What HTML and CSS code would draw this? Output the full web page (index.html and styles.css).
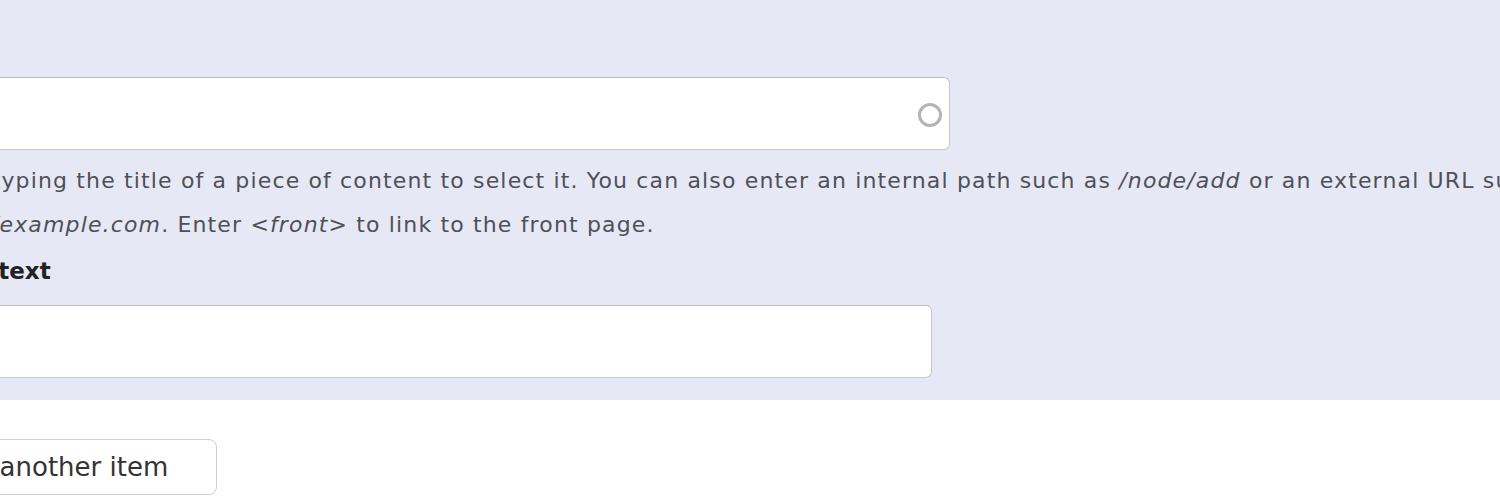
FILE: index.html
```html
<!DOCTYPE html>
<html lang="en">
<head>
<meta charset="utf-8">
<title>Link field</title>
<link rel="stylesheet" href="styles.css">
</head>
<body>
<div class="page">
  <section class="item">
    <div class="field">
      <div class="autocomplete">
        <input class="text-input url-input" type="text" aria-label="Link URL">
        <svg class="throbber" width="26" height="26" viewBox="0 0 26 26" aria-hidden="true">
          <circle cx="13" cy="13" r="10.5" fill="none" stroke="#b4b4b4" stroke-width="3"/>
        </svg>
      </div>
      <div class="description">Start typing the title of a piece of content to select it. You can also enter an internal path such as <em>/node/add</em> or an external URL such as <em>http://example.com</em>. Enter <em>&lt;front&gt;</em> to link to the front page.</div>
    </div>
    <div class="field">
      <label class="label" for="linktext">Link text</label>
      <input id="linktext" class="text-input title-input" type="text">
    </div>
  </section>
  <div class="actions">
    <button class="button" type="button">Add another item</button>
  </div>
</div>
</body>
</html>
```
FILE: styles.css
```css
html, body {
  margin: 0;
  padding: 0;
  background: #ffffff;
  overflow: hidden;
}
body {
  font-family: "DejaVu Sans", "Liberation Sans", Arial, sans-serif;
  color: #333;
}
.page {
  margin-left: -76px;
  width: 1900px;
}
.item {
  background: #e7e8f5;
  margin-left: -20px;
  padding: 77px 0 22px 20px;
}
.autocomplete {
  position: relative;
  width: 1026px;
}
.text-input {
  display: block;
  box-sizing: border-box;
  height: 73px;
  border: 1px solid #c6c6c8;
  border-top-color: #bdbdbf;
  border-radius: 6px;
  background: #fff;
  font: inherit;
  font-size: 22px;
  padding: 0 16px;
  outline: none;
}
.url-input {
  width: 1026px;
}
.title-input {
  width: 1008px;
}
.throbber {
  position: absolute;
  right: 7px;
  top: 25px;
}
.description {
  width: 1760px;
  margin-top: 9px;
  font-size: 22px;
  letter-spacing: 1.15px;
  line-height: 44px;
  color: #4f5057;
}
.description em {
  font-style: italic;
}
.label {
  display: block;
  margin: 9px 0 19px 12px;
  font-size: 23px;
  line-height: 30px;
  font-weight: bold;
  color: #222;
}
.actions {
  padding-top: 39px;
}
.button {
  box-sizing: border-box;
  height: 56px;
  margin-left: -2px;
  padding: 0 48px 0 18px;
  border: 1px solid #cfcfcf;
  border-radius: 8px;
  background: #fff;
  font-family: "DejaVu Sans", "Liberation Sans", Arial, sans-serif;
  font-size: 26px;
  color: #333;
}
```
